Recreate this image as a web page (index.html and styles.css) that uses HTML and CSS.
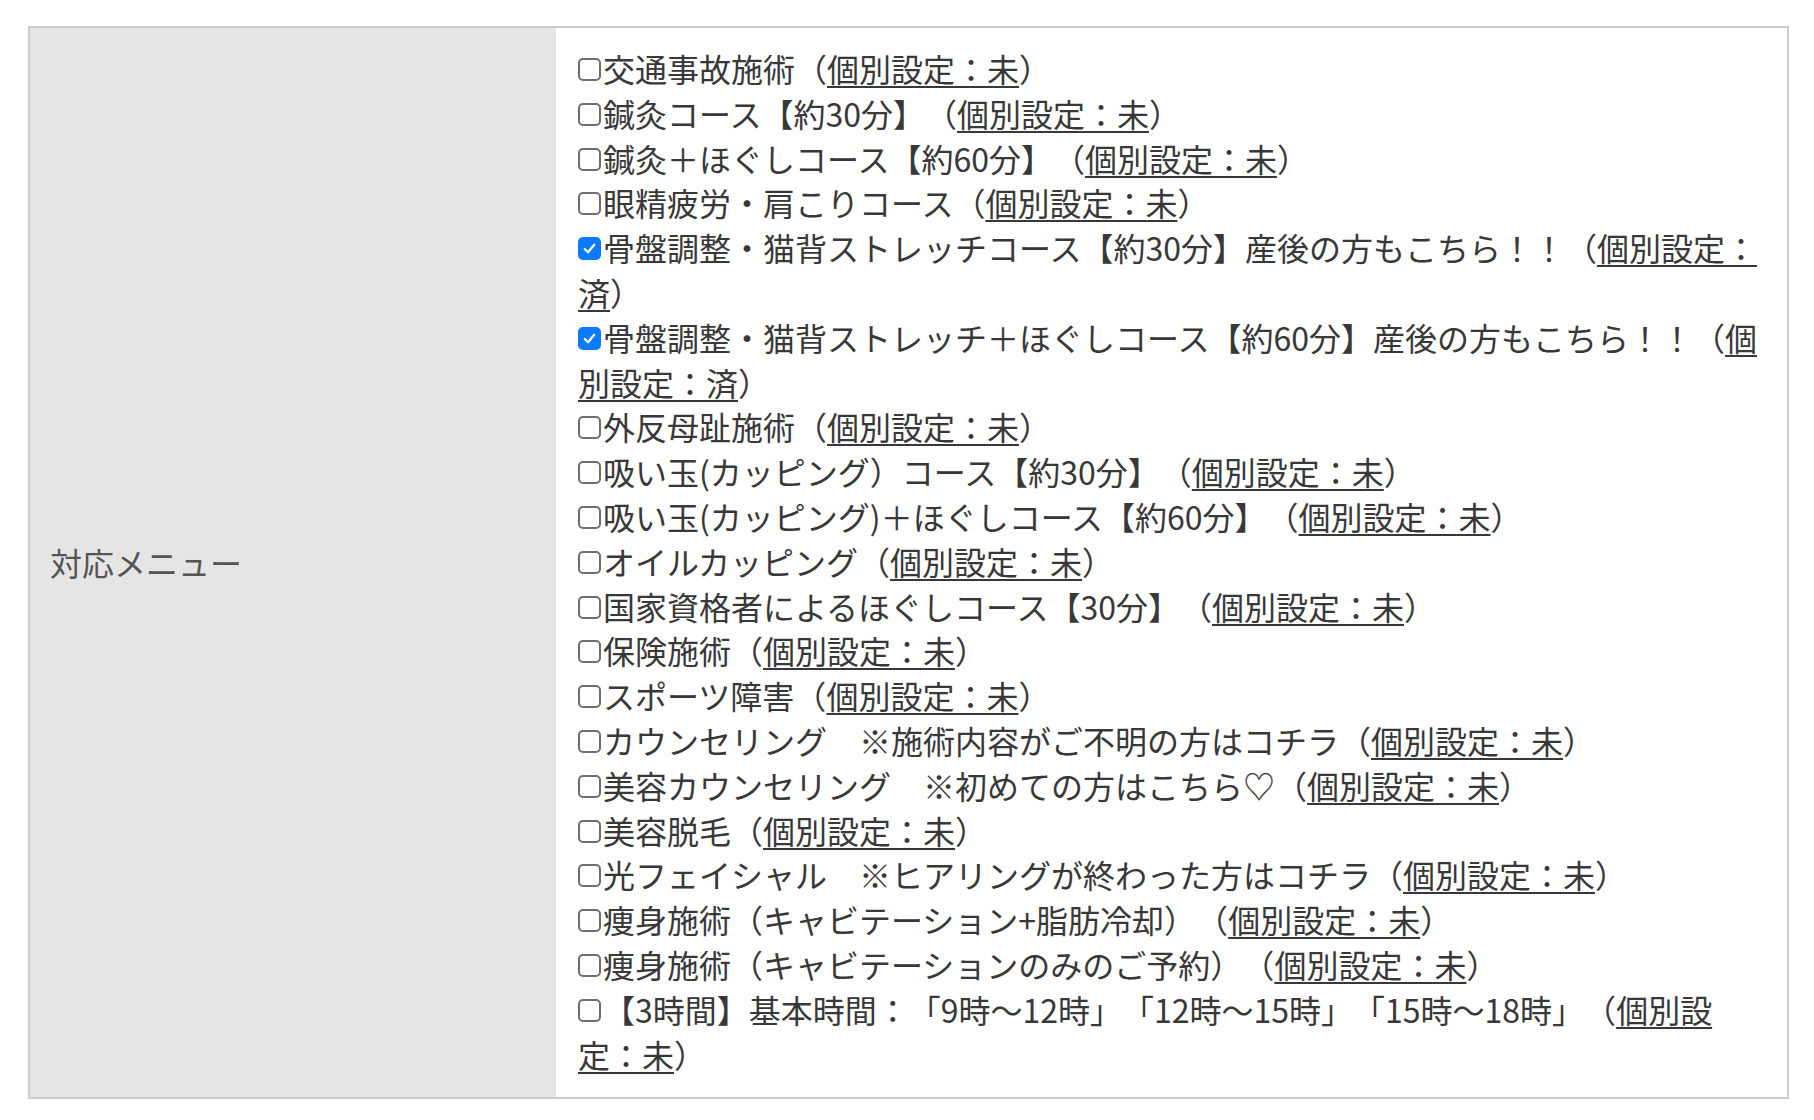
FILE: index.html
```html
<!DOCTYPE html>
<html lang="ja">
<head>
    <meta charset="UTF-8">
    <meta name="viewport" content="width=device-width, initial-scale=1.0">
    <title>対応メニュー</title>
    <link rel="stylesheet" href="styles.css">
</head>
<body>
    <table class="menu-table">
        <tr>
            <th class="menu-label">対応メニュー</th>
            <td class="menu-list">
                <label class="menu-item"><input type="checkbox">交通事故施術（<a href="#">個別設定：未</a>）</label>
                <label class="menu-item"><input type="checkbox">鍼灸コース【約30分】（<a href="#">個別設定：未</a>）</label>
                <label class="menu-item"><input type="checkbox">鍼灸＋ほぐしコース【約60分】（<a href="#">個別設定：未</a>）</label>
                <label class="menu-item"><input type="checkbox">眼精疲労・肩こりコース（<a href="#">個別設定：未</a>）</label>
                <label class="menu-item"><input type="checkbox" checked>骨盤調整・猫背ストレッチコース【約30分】産後の方もこちら！！（<a href="#">個別設定：済</a>）</label>
                <label class="menu-item"><input type="checkbox" checked>骨盤調整・猫背ストレッチ＋ほぐしコース【約60分】産後の方もこちら！！（<a href="#">個別設定：済</a>）</label>
                <label class="menu-item"><input type="checkbox">外反母趾施術（<a href="#">個別設定：未</a>）</label>
                <label class="menu-item"><input type="checkbox">吸い玉(カッピング）コース【約30分】（<a href="#">個別設定：未</a>）</label>
                <label class="menu-item"><input type="checkbox">吸い玉(カッピング)＋ほぐしコース【約60分】（<a href="#">個別設定：未</a>）</label>
                <label class="menu-item"><input type="checkbox">オイルカッピング（<a href="#">個別設定：未</a>）</label>
                <label class="menu-item"><input type="checkbox">国家資格者によるほぐしコース【30分】（<a href="#">個別設定：未</a>）</label>
                <label class="menu-item"><input type="checkbox">保険施術（<a href="#">個別設定：未</a>）</label>
                <label class="menu-item"><input type="checkbox">スポーツ障害（<a href="#">個別設定：未</a>）</label>
                <label class="menu-item"><input type="checkbox">カウンセリング　※施術内容がご不明の方はコチラ（<a href="#">個別設定：未</a>）</label>
                <label class="menu-item"><input type="checkbox">美容カウンセリング　※初めての方はこちら♡（<a href="#">個別設定：未</a>）</label>
                <label class="menu-item"><input type="checkbox">美容脱毛（<a href="#">個別設定：未</a>）</label>
                <label class="menu-item"><input type="checkbox">光フェイシャル　※ヒアリングが終わった方はコチラ（<a href="#">個別設定：未</a>）</label>
                <label class="menu-item"><input type="checkbox">痩身施術（キャビテーション+脂肪冷却）（<a href="#">個別設定：未</a>）</label>
                <label class="menu-item"><input type="checkbox">痩身施術（キャビテーションのみのご予約）（<a href="#">個別設定：未</a>）</label>
                <label class="menu-item"><input type="checkbox">【3時間】基本時間：「9時〜12時」「12時〜15時」「15時〜18時」（<a href="#">個別設定：未</a>）</label>
            </td>
        </tr>
    </table>
</body>
</html>
```

FILE: styles.css
```css
body {
    margin: 0;
    padding: 26px 25px 20px 28px;
    background-color: #fff;
    font-family: "Hiragino Kaku Gothic ProN", "Noto Sans CJK JP", "Noto Sans", sans-serif;
    font-size: 32px;
    line-height: 1.4;
    color: #383838;
    text-spacing-trim: space-all;
}
.menu-table {
    width: 100%;
    border-collapse: collapse;
    border: 2px solid #ccc;
}
.menu-label {
    width: 486px;
    padding: 0 20px;
    background-color: #e5e5e5;
    color: #555;
    font-weight: normal;
    text-align: left;
    vertical-align: middle;
}
.menu-list {
    padding: 18px 22px 21px;
    background-color: #fff;
}
.menu-item {
    display: block;
}
.menu-item input {
    appearance: none;
    -webkit-appearance: none;
    width: 23px;
    height: 23px;
    margin: 0 2px 0 0;
    border: 2px solid #6e6e6e;
    border-radius: 5px;
    background-color: #fff;
    vertical-align: 1px;
    box-sizing: border-box;
}
.menu-item input:checked {
    border-color: #0a7aff;
    background-color: #0a7aff;
    background-image: url("data:image/svg+xml,%3Csvg xmlns='http://www.w3.org/2000/svg' viewBox='0 0 22 22'%3E%3Cpath d='M5.5 11.5l3.8 3.8 7.2-8.6' fill='none' stroke='%23fff' stroke-width='2.6' stroke-linecap='round' stroke-linejoin='round'/%3E%3C/svg%3E");
    background-size: 100% 100%;
}
.menu-item a {
    color: #383838;
    text-decoration: underline;
    text-decoration-thickness: 2px;
    text-underline-offset: 4px;
}
```
